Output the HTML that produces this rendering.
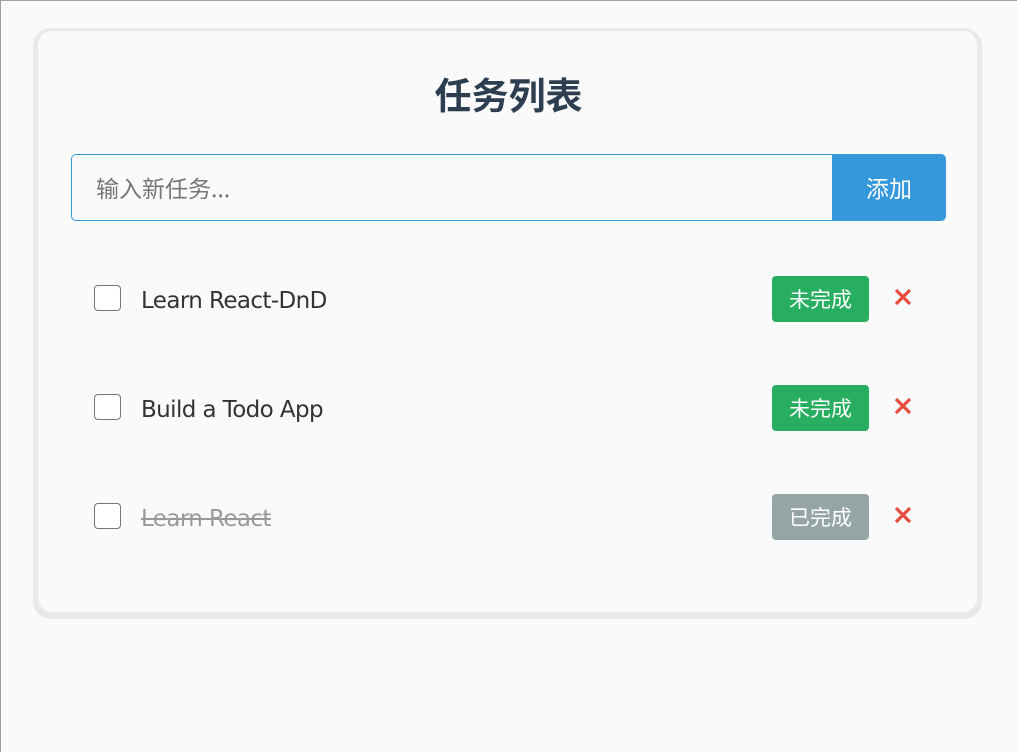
<!DOCTYPE html>
<html><head><meta charset="utf-8"><style>
*{box-sizing:border-box;margin:0;padding:0}
body{width:1017px;height:752px;background:#fafafa;font-family:"Liberation Sans","Noto Sans CJK SC",sans-serif;position:relative;overflow:hidden}
.lt{position:absolute;left:0;top:0;width:1017px;height:1px;background:#a0a0a0}
.ll{position:absolute;left:0;top:0;width:1px;height:752px;background:#a0a0a0}
.outer{position:absolute;left:33px;top:28px;width:949px;height:591px;background:#e9e9e9;border-radius:18px}
.card{position:absolute;left:38px;top:31px;width:939px;height:581px;background:#fafafa;border-radius:14px}
h1{position:absolute;left:0;width:1017px;top:69px;text-align:center;font-size:37px;font-weight:bold;color:#2c3e50;font-family:"Noto Sans CJK SC",sans-serif;line-height:48px}
.inp{position:absolute;left:71px;top:154px;width:762px;height:67px;border:1px solid #3498db;border-right:none;border-radius:5px 0 0 5px;background:#fafafa;font-size:23px;color:#767676;padding-left:24px;line-height:64px;font-family:"Noto Sans CJK SC",sans-serif}
.btn{position:absolute;left:832px;top:154px;width:114px;height:67px;background:#3498db;border-radius:0 5px 5px 0;color:#fff;font-size:23px;text-align:center;line-height:67px;font-family:"Noto Sans CJK SC",sans-serif}
.cb{position:absolute;left:94px;width:27px;height:26px;border:1.5px solid #767676;border-radius:4px;background:#fff}
.t{position:absolute;left:141px;font-size:23px;color:#333;line-height:30px;font-family:"DejaVu Sans","Liberation Sans",sans-serif;letter-spacing:-0.6px}
.b{position:absolute;left:772px;width:97px;height:46px;border-radius:4px;color:#fff;font-size:21px;text-align:center;line-height:46px;font-family:"Noto Sans CJK SC",sans-serif}
.x{position:absolute;left:892px;width:22px;height:22px}
</style></head><body>
<div class="lt"></div><div class="ll"></div>
<div class="outer"></div><div class="card"></div>
<h1>任务列表</h1>
<div class="inp">输入新任务...</div>
<div class="btn">添加</div>

<div class="cb" style="top:285px"></div>
<div class="t" style="top:286px">Learn React-DnD</div>
<div class="b" style="top:276px;background:#27ae60">未完成</div>
<svg class="x" style="top:286px" viewBox="0 0 22 22"><path d="M4 4L18 18M18 4L4 18" stroke="#e74c3c" stroke-width="3.2"/></svg>

<div class="cb" style="top:394px"></div>
<div class="t" style="top:395px">Build a Todo App</div>
<div class="b" style="top:385px;background:#27ae60">未完成</div>
<svg class="x" style="top:395px" viewBox="0 0 22 22"><path d="M4 4L18 18M18 4L4 18" stroke="#e74c3c" stroke-width="3.2"/></svg>

<div class="cb" style="top:503px"></div>
<div class="t" style="top:504px;color:#999;text-decoration:line-through">Learn React</div>
<div class="b" style="top:494px;background:#95a5a6">已完成</div>
<svg class="x" style="top:504px" viewBox="0 0 22 22"><path d="M4 4L18 18M18 4L4 18" stroke="#e74c3c" stroke-width="3.2"/></svg>
</body></html>
